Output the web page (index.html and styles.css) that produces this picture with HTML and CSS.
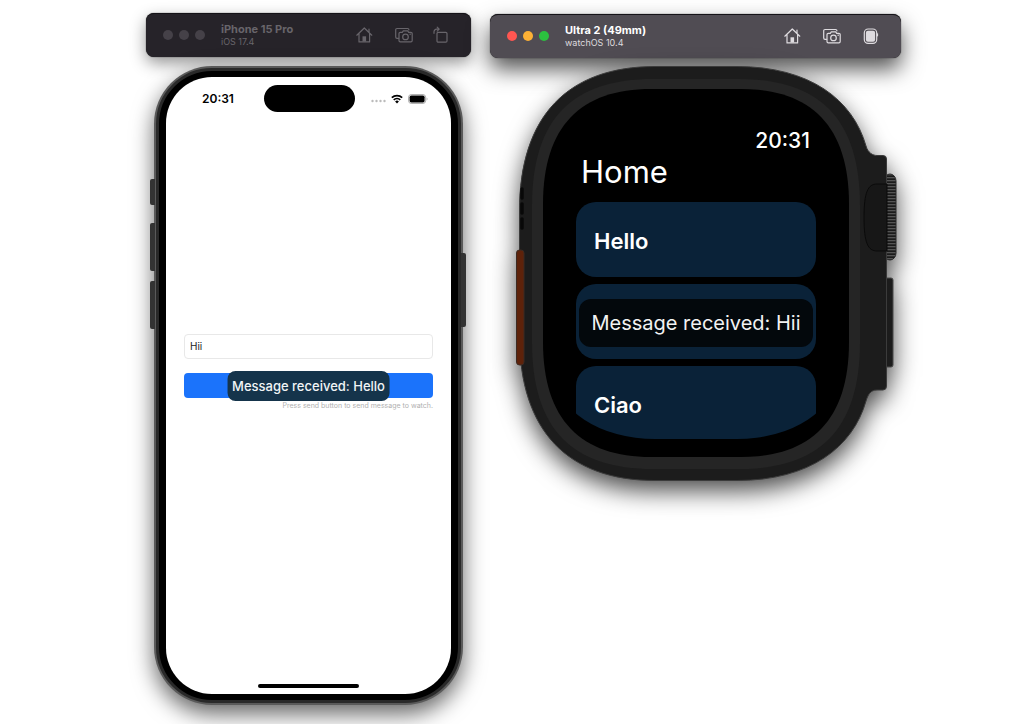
FILE: index.html
```html
<!DOCTYPE html>
<html lang="en">
<head>
<meta charset="utf-8">
<meta name="viewport" content="width=device-width, initial-scale=1">
<title>Simulators</title>
<link rel="stylesheet" href="styles.css">
</head>
<body>
<main class="desktop">
  <section class="simulator simulator-phone">
    <header class="titlebar titlebar-inactive">
      <div class="lights"><span class="light"></span><span class="light"></span><span class="light"></span></div>
      <div class="device-name"><h2 class="device-title">iPhone 15 Pro</h2><p class="device-os">iOS 17.4</p></div>
      <div class="tools">
        <button class="tool" aria-label="Home"><svg class="icon" viewBox="0 0 20 20"><path d="M1.800 10.200 9.300 3l7.500 7.200M4 8.500v8.400h10.600V8.500M14 7V4"/><path class="solid" d="M7.500 11.300h3.600v5.200H7.500z"/></svg></button>
        <button class="tool" aria-label="Screenshot"><svg class="icon" viewBox="0 0 20 20"><path d="M4.600 13.300H3a1.300 1.300 0 0 1-1.300-1.300V4.800A1.300 1.300 0 0 1 3 3.500h10.600a1.300 1.300 0 0 1 1.300 1.300"/><path d="M6.300 7.300h2l1-1.500h4.400l1 1.500h2.200a1.300 1.300 0 0 1 1.300 1.300v7a1.300 1.300 0 0 1-1.300 1.300H6.300A1.300 1.300 0 0 1 5 15.600v-7a1.300 1.300 0 0 1 1.300-1.300z"/><circle cx="11.500" cy="11.900" r="2.800"/><path d="M16 9.200h.4"/></svg></button>
        <button class="tool tool-narrow" aria-label="Rotate"><svg class="icon" viewBox="0 0 18 20"><rect x="4" y="7.300" width="10" height="9.800" rx="1.200"/><path d="M1 8.300V6.800a2.600 2.600 0 0 1 2.600-2.600h2.200M4.200 2.200l2 2-2 2"/></svg></button>
      </div>
    </header>
    <div class="phone">
      <span class="key key-action"></span><span class="key key-up"></span><span class="key key-down"></span><span class="key key-power"></span>
      <div class="phone-bezel">
        <div class="phone-screen">
          <div class="statusbar">
            <time class="phone-time">20:31</time>
            <span class="island"></span>
            <span class="status-icons">
              <svg class="status-dots" viewBox="0 0 15 4"><circle cx="1.500" cy="2" r="1.200"/><circle cx="5.500" cy="2" r="1.200"/><circle cx="9.500" cy="2" r="1.200"/><circle cx="13.500" cy="2" r="1.200"/></svg>
              <svg class="status-wifi" viewBox="0 0 12 10"><path d="M.8 3.700a7.500 7.500 0 0 1 10.400 0M2.700 5.900a4.800 4.800 0 0 1 6.600 0"/><path class="wifi-tip" d="M4.100 7.400a2.900 2.900 0 0 1 3.800 0L6 9.600z"/></svg>
              <svg class="status-battery" viewBox="0 0 20 10"><rect class="battery-case" x=".6" y=".6" width="17" height="8.800" rx="2.600"/><rect class="battery-fill" x="1.600" y="1.600" width="15" height="6.800" rx="1.700"/><path class="battery-tip" d="M18.600 3.500c1.200.5 1.200 2.500 0 3z"/></svg>
            </span>
          </div>
          <form class="composer">
            <input class="message-input" type="text" value="Hii" aria-label="Message">
            <button class="send" type="button" aria-label="Send"></button>
            <p class="hint">Press send button to send message to watch.</p>
          </form>
          <span class="home-indicator"></span>
          <div class="phone-toast" role="status">Message received: Hello</div>
        </div>
      </div>
    </div>
  </section>

  <section class="simulator simulator-watch">
    <header class="titlebar titlebar-active">
      <div class="lights"><span class="light light-close"></span><span class="light light-minimize"></span><span class="light light-zoom"></span></div>
      <div class="device-name"><h2 class="device-title">Ultra 2 (49mm)</h2><p class="device-os">watchOS 10.4</p></div>
      <div class="tools">
        <button class="tool" aria-label="Home"><svg class="icon" viewBox="0 0 20 20"><path d="M1.800 10.200 9.300 3l7.500 7.200M4 8.500v8.400h10.600V8.500M14 7V4"/><path class="solid" d="M7.500 11.300h3.600v5.200H7.500z"/></svg></button>
        <button class="tool" aria-label="Screenshot"><svg class="icon" viewBox="0 0 20 20"><path d="M4.600 13.300H3a1.300 1.300 0 0 1-1.300-1.300V4.800A1.300 1.300 0 0 1 3 3.500h10.600a1.300 1.300 0 0 1 1.300 1.300"/><path d="M6.300 7.300h2l1-1.500h4.400l1 1.500h2.200a1.300 1.300 0 0 1 1.300 1.300v7a1.300 1.300 0 0 1-1.300 1.300H6.300A1.300 1.300 0 0 1 5 15.600v-7a1.300 1.300 0 0 1 1.300-1.300z"/><circle cx="11.500" cy="11.900" r="2.800"/><path d="M16 9.200h.4"/></svg></button>
        <button class="tool" aria-label="Digital crown"><svg class="icon" viewBox="0 0 20 20"><rect x="3.300" y="3" width="12.400" height="14.400" rx="3.800"/><rect class="solid" x="4.900" y="4.700" width="9.200" height="11" rx="2"/><path d="M16.500 7.800v2"/></svg></button>
      </div>
    </header>
    <div class="watch">
      <svg class="watch-shell" viewBox="0 0 411 415" aria-hidden="true">
        <defs>
          <pattern id="ridges" width="10" height="3" patternUnits="userSpaceOnUse"><rect width="10" height="3" fill="#1b1b1b"/><rect width="10" height="1.300" fill="#555"/></pattern>
        </defs>
        <rect x="394" y="108" width="12" height="86" rx="7" fill="url(#ridges)" stroke="#2a2a2a"/>
        <rect x="392" y="212" width="11" height="89" rx="2" fill="#1c1c1c" stroke="#4a4a4a"/>
        <path class="watch-body" d="M29.500 145C29.500 50 78 .5 165 .5H247C320 .5 363 34 376 80 378 87 383 89.500 387 89.500H393Q396.500 89.500 396.500 93V320Q396.500 324 393 324H387C380 324 378 329 376 335 363 381 320 414.500 247 414.500H165C78 414.500 29.500 365 29.500 270Z"/>
        <path d="M397 118H387C378 118 374 126 374 151.500S378 185 387 185H397Z" fill="#171717" stroke="#0a0a0a"/>
        <path fill="#252525" d="M42 140C42 52 83 13 163 13H249C329 13 370 52 370 140V276C370 364 329 403 249 403H163C83 403 42 364 42 276Z"/>
        <path fill="#000" d="M53 138C53 60 91 23 161 23H251C321 23 359 60 359 138V276C359 354 321 391 251 391H161C91 391 53 354 53 276Z"/>
        <rect x="26.500" y="184" width="7.500" height="115" rx="3" fill="#5e220a" stroke="#3c2a22"/>
        <path d="M32 123v9M32 138v9M32 153v9" stroke="#080808" stroke-width="3.500" stroke-linecap="round"/>
      </svg>
      <div class="watch-screen">
        <time class="watch-time">20:31</time>
        <h1 class="watch-title">Home</h1>
        <ul class="greetings">
          <li class="greeting"><button class="greeting-button">Hello</button></li>
          <li class="greeting"><button class="greeting-button" aria-label="Greeting"></button><div class="watch-toast" role="status">Message received: Hii</div></li>
          <li class="greeting"><button class="greeting-button greeting-cut">Ciao</button></li>
        </ul>
      </div>
    </div>
  </section>
</main>
</body>
</html>
```
FILE: styles.css
```css
* { box-sizing: border-box; }
body { margin: 0; background: #fff; font-family: Inter, "Liberation Sans", sans-serif; overflow-x: hidden; }
h1, h2, p, ul { margin: 0; padding: 0; }
button { border: 0; padding: 0; font: inherit; color: inherit; }
svg { display: block; }

.desktop { display: flex; justify-content: center; align-items: flex-start; gap: 19px; padding: 13px 0 19px 16px; min-height: 100vh; }
.simulator { display: flex; flex-direction: column; }
.simulator-phone { flex: 0 1 325px; gap: 9px; }
.simulator-watch { flex: 0 0 411px; gap: 8px; padding-top: 1px; }

.titlebar { position: relative; display: flex; align-items: center; gap: 16px; min-height: 44px; padding: 0 20px 2px 17px; border-radius: 8px; border-top: 1px solid #151318; }
.titlebar-active { background: #504c53; color: #dedbdf; box-shadow: 0 0 1px #000, 0 11px 22px rgba(0, 0, 0, .68); }
.titlebar-inactive { background: #262329; color: #68656b; box-shadow: 0 0 1px #000, 0 6px 16px rgba(0, 0, 0, .42); }
.titlebar-active .device-title { color: #fff; }
.lights { display: flex; gap: 6px; }
.light { width: 10px; height: 10px; border-radius: 50%; background: #454148; }
.light-close { background: #ff5651; }
.light-minimize { background: #fdb135; }
.light-zoom { background: #2bc03f; }
.device-name { flex: 1; }
.device-title { font-size: 11px; line-height: 13px; font-weight: 700; }
.device-os { font-size: 9px; line-height: 11px; }
.tools { display: flex; gap: 19px; }
.tool { width: 20px; height: 20px; background: none; }
.tool-narrow { width: 18px; }
.icon { width: 100%; height: 100%; fill: none; stroke: currentColor; stroke-width: 1.2; stroke-linecap: round; stroke-linejoin: round; }
.icon .solid { fill: currentColor; stroke: none; }

.phone { position: relative; margin: 0 8px; padding: 2px; border-radius: 58px; background: #5a5a5a; box-shadow: 0 9px 22px rgba(0, 0, 0, .6); }
.phone-bezel { padding: 6px 7px; border: 3px solid #292929; border-radius: 56px; background: #000; }
.phone-screen { position: relative; display: flex; flex-direction: column; aspect-ratio: 285 / 617; border-radius: 46px; background: #fff; }
.key { position: absolute; left: -4px; width: 5px; border-radius: 2px 0 0 2px; background: #333; }
.key-action { top: 113px; height: 26px; }
.key-up { top: 157px; height: 48px; }
.key-down { top: 215px; height: 48px; }
.key-power { top: 187px; left: auto; right: -3px; height: 74px; border-radius: 0 2px 2px 0; }

.statusbar { display: grid; grid-template-columns: 1fr 91px 1fr; align-items: center; height: 43px; padding: 0 23px 0 24px; }
.phone-time { padding-left: 12px; font-size: 12px; line-height: 16px; font-weight: 600; }
.island { width: 91px; height: 27px; border-radius: 14px; background: #000; }
.status-icons { display: flex; align-items: center; justify-content: flex-end; gap: 5px; }
.status-dots { width: 15px; height: 4px; margin-top: 5px; fill: #bbb; }
.status-wifi { width: 12px; height: 10px; fill: none; stroke: #000; stroke-width: 1.6; }
.status-wifi .wifi-tip { fill: #000; stroke: none; }
.status-battery { width: 20px; height: 10px; }
.battery-case { fill: #fff; stroke: #aaa; }
.battery-fill { fill: #000; }
.battery-tip { fill: #aaa; }

.composer { flex: 1; display: flex; flex-direction: column; justify-content: center; padding: 0 18px 60px; }
.message-input { width: 100%; height: 25px; padding: 0 5px; border: 1px solid #e8e8e8; border-radius: 4px; background: #fff; color: #222; font: 400 10px/12px Inter, "Liberation Sans", sans-serif; }
.send { height: 25px; margin-top: 14px; border-radius: 4px; background: #1b73fb; }
.hint { margin-top: 3px; color: #b0b0b0; font-size: 7px; line-height: 10px; text-align: right; white-space: nowrap; }
.home-indicator { align-self: center; width: 101px; height: 4px; margin-bottom: 6px; border-radius: 2px; background: #000; }
.phone-toast { position: absolute; top: 50%; left: 50%; transform: translate(-50%, -50%); padding: 7px 5px; border-radius: 8px; background: #15344b; color: #f1f4f6; font-size: 13px; line-height: 16px; font-weight: 500; white-space: nowrap; }

.watch { position: relative; padding: 58px 64px 42px 65px; color: #fff; }
.watch-shell { position: absolute; inset: 0; width: 100%; height: 100%; overflow: visible; filter: drop-shadow(0 10px 12px rgba(0, 0, 0, .7)); }
.watch-body { fill: #1c1c1c; stroke: #3b3b3b; }
.watch-screen { position: relative; display: flex; flex-direction: column; padding: 0 21px; overflow: hidden; border-radius: 0 0 100px 100px / 0 0 66px 66px; }
.watch-time { padding: 2px 6px 0 0; text-align: right; font-size: 21px; line-height: 30px; font-weight: 500; }
.watch-title { padding-left: 5px; font-size: 31px; line-height: 32px; font-weight: 400; }
.greetings { display: grid; grid-template-rows: 75px 75px 73px; gap: 7px; margin-top: 14px; list-style: none; }
.greeting { position: relative; display: flex; }
.greeting-button { flex: 1; padding: 2px 18px 0; border-radius: 20px; background: #0a2238; font-size: 22px; line-height: 26px; font-weight: 600; text-align: left; }
.greeting-cut { padding-top: 5px; border-radius: 20px 20px 0 0; }
.watch-toast { position: absolute; inset: 15px 3px 12px; display: flex; align-items: center; justify-content: center; border-radius: 12px; background: #03080c; color: #f2f2f2; font-size: 20px; line-height: 24px; white-space: nowrap; }
```
